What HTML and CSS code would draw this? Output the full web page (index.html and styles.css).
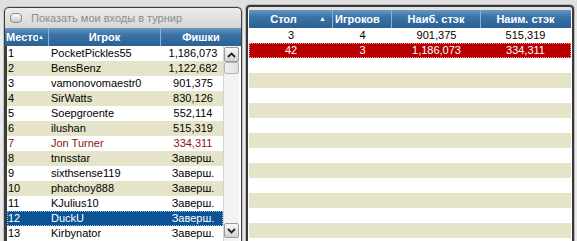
FILE: index.html
```html
<!DOCTYPE html>
<html lang="ru">
<head>
  <meta charset="UTF-8" />
  <title>Турнир</title>
  <link rel="stylesheet" href="styles.css">
</head>
<body>
  <div class="lobby">
    <div class="players-panel">
      <div class="toggle-bar">
        <span class="pill"></span>
        <span class="toggle-label">Показать мои входы в турнир</span>
      </div>
      <div class="grid-head left-head">
        <div class="col-rank"><span class="rank-title">Место</span><span class="sort-arrow">&#9650;</span></div>
        <div class="col-name">Игрок</div>
        <div class="col-chips">Фишки</div>
      </div>
      <div class="players-body">
        <div class="players-rows">
          <div class="prow"><span class="c-rank">1</span><span class="c-name">PocketPickles55</span><span class="c-chips">1,186,073</span></div>
          <div class="prow alt"><span class="c-rank">2</span><span class="c-name">BensBenz</span><span class="c-chips">1,122,682</span></div>
          <div class="prow"><span class="c-rank">3</span><span class="c-name">vamonovomaestr0</span><span class="c-chips">901,375</span></div>
          <div class="prow alt"><span class="c-rank">4</span><span class="c-name">SirWatts</span><span class="c-chips">830,126</span></div>
          <div class="prow"><span class="c-rank">5</span><span class="c-name">Soepgroente</span><span class="c-chips">552,114</span></div>
          <div class="prow alt"><span class="c-rank">6</span><span class="c-name">ilushan</span><span class="c-chips">515,319</span></div>
          <div class="prow me"><span class="c-rank">7</span><span class="c-name">Jon Turner</span><span class="c-chips">334,311</span></div>
          <div class="prow alt"><span class="c-rank">8</span><span class="c-name">tnnsstar</span><span class="c-chips">Заверш.</span></div>
          <div class="prow"><span class="c-rank">9</span><span class="c-name">sixthsense119</span><span class="c-chips">Заверш.</span></div>
          <div class="prow alt"><span class="c-rank">10</span><span class="c-name">phatchoy888</span><span class="c-chips">Заверш.</span></div>
          <div class="prow"><span class="c-rank">11</span><span class="c-name">KJulius10</span><span class="c-chips">Заверш.</span></div>
          <div class="prow selected"><span class="c-rank">12</span><span class="c-name">DuckU</span><span class="c-chips">Заверш.</span></div>
          <div class="prow"><span class="c-rank">13</span><span class="c-name">Kirbynator</span><span class="c-chips">Заверш.</span></div>
        </div>
        <div class="scrollbar">
          <div class="sb-btn">
            <svg width="9" height="6" viewBox="0 0 9 6"><path d="M1 5 L4.5 1.5 L8 5" fill="none" stroke="#222" stroke-width="1.8"/></svg>
          </div>
          <div class="sb-thumb"></div>
          <div class="sb-track"></div>
          <div class="sb-btn">
            <svg width="9" height="6" viewBox="0 0 9 6"><path d="M1 1 L4.5 4.5 L8 1" fill="none" stroke="#222" stroke-width="1.8"/></svg>
          </div>
        </div>
      </div>
    </div>

    <div class="tables-panel">
      <div class="grid-head right-head">
        <div class="col-table">Стол<span class="sort-up">&#9650;</span></div>
        <div class="col-count">Игроков</div>
        <div class="col-max">Наиб. стэк</div>
        <div class="col-min">Наим. стэк</div>
      </div>
      <div class="tables-body">
        <div class="trow"><span>3</span><span>4</span><span>901,375</span><span>515,319</span></div>
        <div class="trow mine"><span>42</span><span>3</span><span>1,186,073</span><span>334,311</span></div>
        <div class="trow"></div>
        <div class="trow alt"></div>
        <div class="trow"></div>
        <div class="trow alt"></div>
        <div class="trow"></div>
        <div class="trow alt"></div>
        <div class="trow"></div>
        <div class="trow alt"></div>
        <div class="trow"></div>
        <div class="trow alt"></div>
        <div class="trow"></div>
        <div class="trow alt"></div>
      </div>
    </div>
  </div>
</body>
</html>
```

FILE: styles.css
```css
body {
  margin: 0;
  background: linear-gradient(to bottom, #dedede, #ececec 40px, #e9e9e9);
  font-family: 'Liberation Sans', Arial, sans-serif;
  font-size: 11px;
  color: #000;
  height: 241px;
  overflow: hidden;
}

.lobby {
  display: flex;
  align-items: flex-start;
  padding-left: 4px;
  gap: 4px;
}

/* left: players */
.players-panel {
  margin-top: 7px;
  width: 236px;
  height: 240px;
  border: 1px solid #3d3d3d;
  border-bottom: none;
  border-radius: 5px 5px 0 0;
  box-shadow: 0 0 0 1px #c4c4c4;
  background: linear-gradient(to bottom, #ececec, #d6d6d6 20px);
  overflow: hidden;
}

.toggle-bar {
  height: 20px;
  display: flex;
  align-items: center;
  padding-left: 5px;
  gap: 9px;
}

.pill {
  width: 10px;
  height: 8px;
  border-radius: 4px;
  border: 1px solid #8a8a8a;
  background: linear-gradient(to bottom, #ffffff, #c9c9c9);
}

.toggle-label {
  color: #8c8c8c;
  font-size: 11px;
}

.grid-head {
  display: flex;
  height: 18px;
  background: linear-gradient(to bottom, #6a98c4 0%, #3d75a9 35%, #2a6094 100%);
  color: #fff;
  font-weight: bold;
  font-size: 11px;
  line-height: 18px;
}

.grid-head > div {
  border-right: 1px solid #8fb0cf;
  box-sizing: border-box;
  text-align: center;
  white-space: nowrap;
  overflow: hidden;
}

.left-head .col-rank {
  width: 44px;
  display: flex;
  padding-left: 1px;
}

.rank-title {
  width: 32px;
  overflow: hidden;
  text-align: left;
}

.sort-arrow {
  font-size: 6px;
}

.left-head .col-name { width: 112px; }
.left-head .col-chips { flex: 1; border-right: none; }

.players-body {
  display: flex;
  background: #fff;
  border-left: 2px solid #3d3d3d;
  height: 200px;
}

.players-rows {
  width: 216px;
}

.prow {
  display: flex;
  height: 15px;
  line-height: 15px;
  font-size: 11px;
  background: #fff;
  box-sizing: border-box;
}

.prow.alt { background: #e6e4c8; }
.prow.me { color: #8e1111; }

.prow.selected {
  background: #0b5394;
  color: #fff;
  outline: 1px dotted #9ab8d8;
  outline-offset: -1px;
}

.c-rank { width: 42px; padding-left: 1px; }
.c-name { width: 112px; padding-left: 1px; }
.c-chips { flex: 1; text-align: center; }

.scrollbar {
  width: 16px;
  display: flex;
  flex-direction: column;
  background: #f3f3f3;
  border-left: 1px solid #d4d4d4;
  box-sizing: border-box;
}

.sb-btn {
  height: 15px;
  display: flex;
  align-items: center;
  justify-content: center;
  border: 1px solid #9a9a9a;
  border-radius: 2px;
  background: linear-gradient(to bottom, #f8f8f8, #d2d2d2);
  box-sizing: border-box;
  margin: 1px 0 0 0;
}

.sb-thumb {
  height: 12px;
  border: 1px solid #b4b4b4;
  border-radius: 2px;
  background: linear-gradient(to right, #f2f2f2, #e0e0e0);
  box-sizing: border-box;
}

.sb-track { flex: 1; max-height: 148px; }

/* right: tables */
.tables-panel {
  margin-top: 5px;
  width: 322px;
  height: 233px;
  border: 2px solid #383838;
  border-radius: 4px 4px 0 0;
  box-shadow: 0 0 0 1px #b8b8b8;
  padding: 3px 1px 0 1px;
  background: linear-gradient(to bottom, #e2e2e2, #e2e2e2 3px, #fff 3px);
}

.right-head .col-table { width: 84px; position: relative; padding-right: 14px; }
.right-head .col-count { width: 59px; text-align: left; padding-left: 2px; }
.right-head .col-max { width: 89px; }
.right-head .col-min { width: 89px; border-right: none; }

.sort-up {
  position: absolute;
  right: 6px;
  top: 0;
  font-size: 7px;
}

.trow {
  display: flex;
  height: 15px;
  line-height: 15px;
  font-size: 11px;
  background: #fff;
}

.trow.alt { background: #e6e4c8; }

.trow.mine {
  background: #b80000;
  color: #fff;
  outline: 1px dotted #f0a0a0;
  outline-offset: -1px;
}

.trow span { text-align: center; }
.trow span:nth-child(1) { width: 84px; }
.trow span:nth-child(2) { width: 59px; }
.trow span:nth-child(3) { width: 89px; }
.trow span:nth-child(4) { width: 89px; }
```
